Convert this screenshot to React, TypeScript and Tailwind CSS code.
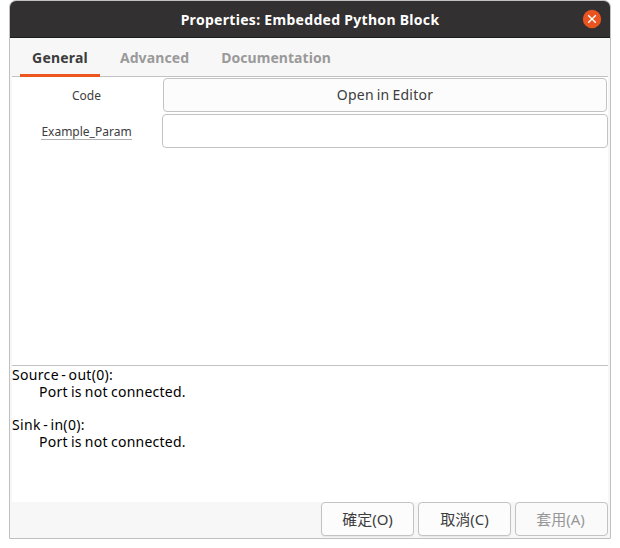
import type { ReactNode } from 'react';

interface Port {
  name: string;
  status: string;
}

const TABS = [
  { label: 'General', className: 'w-20 tracking-[0.2px]' },
  { label: 'Advanced', className: 'w-[109px] tracking-[0.1px]' },
  { label: 'Documentation', className: 'w-[134px] tracking-[0.05px]' },
];

const PORTS: Port[] = [
  { name: 'Source - out(0):', status: 'Port is not connected.' },
  { name: 'Sink - in(0):', status: 'Port is not connected.' },
];

function TitleBar({ title }: { title: string }) {
  return (
    <div className="relative flex h-[37px] items-center justify-center rounded-t-[6px] border-b border-[#1d1c1c] bg-[#333031]">
      <h1 className="text-[14px] font-bold tracking-[0.3px] whitespace-nowrap text-white">{title}</h1>
      <button aria-label="Close" className="absolute top-[9px] right-[9px] size-[18px]">
        <svg viewBox="0 0 18 18" className="block size-full overflow-visible">
          <circle cx="9" cy="9" r="9.2" fill="#e95420" />
          <path d="M5.2 5.2l7.6 7.6M12.8 5.2l-7.6 7.6" stroke="#fff" strokeWidth="1.4" />
        </svg>
      </button>
    </div>
  );
}

function TabBar() {
  return (
    <div className="flex h-[39px] border-b border-[#c4c3c2] pl-2">
      {TABS.map((tab, i) => (
        <button
          key={tab.label}
          className={`-mb-px flex items-center justify-center border-b-[3px] pt-0.5 text-[14px] font-bold ${tab.className} ${
            i === 0 ? 'border-[#ee5620] text-[#3d3d3d]' : 'border-transparent text-[#9a9a9a]'
          }`}
        >
          {tab.label}
        </button>
      ))}
    </div>
  );
}

function DialogButton({ children, disabled }: { children: ReactNode; disabled?: boolean }) {
  return (
    <button
      disabled={disabled}
      className={`h-[34px] w-[93px] rounded-[4px] border border-[#c4c3c2] text-[15px] ${
        disabled ? 'bg-[#fafafa] pr-0.5 text-[#979797]' : 'bg-[#fcfcfc] text-[#3d3d3d] shadow-[0_1px_1px_#e8e8e8]'
      }`}
    >
      {children}
    </button>
  );
}

export default function App() {
  return (
    <div className="h-[548px] w-[620px] bg-white pl-[9px] font-['Noto_Sans','Noto_Sans_CJK_TC',sans-serif]">
      <div className="flex h-[539px] w-[602px] flex-col rounded-t-[7px] border border-[#c0c0c0] bg-[#f7f7f7]">
        <TitleBar title="Properties: Embedded Python Block" />
        <div className="flex grow flex-col px-0.5">
          <TabBar />

          <div className="flex h-[288px] flex-col gap-0.5 bg-white pt-px text-[#3d3d3d]">
            <div className="flex items-center">
              <label className="w-[151px] pt-0.5 pr-0.5 text-center text-[12px]">Code</label>
              <button className="mr-px h-[34px] grow rounded-[4px] border border-[#c4c3c2] bg-[#fcfcfc] pb-0.5 text-[14px] tracking-[0.25px] [word-spacing:-1px]">
                Open in Editor
              </button>
            </div>
            <div className="flex items-center">
              <label className="flex w-[150px] justify-center pr-px text-[12px]">
                <span className="border-b border-[#b0b0b0] pt-0.5 leading-[15px]">Example_Param</span>
              </label>
              <input className="h-[34px] grow rounded-[4px] border border-[#c4c3c2] bg-white px-2 text-[14px] outline-none" />
            </div>
          </div>

          <div className="flex h-[137px] flex-col gap-[16px] border-t border-[#c4c3c2] bg-white text-[14px] leading-[17px] tracking-[0.25px] text-black">
            {PORTS.map((port) => (
              <div key={port.name}>
                <p className="tracking-[0.32px] [word-spacing:-1.5px]">{port.name}</p>
                <p className="pl-[27px] [word-spacing:-0.75px]">{port.status}</p>
              </div>
            ))}
          </div>

          <div className="flex justify-end gap-1">
            <DialogButton>確定(O)</DialogButton>
            <DialogButton>取消(C)</DialogButton>
            <DialogButton disabled>套用(A)</DialogButton>
          </div>
        </div>
      </div>
    </div>
  );
}
